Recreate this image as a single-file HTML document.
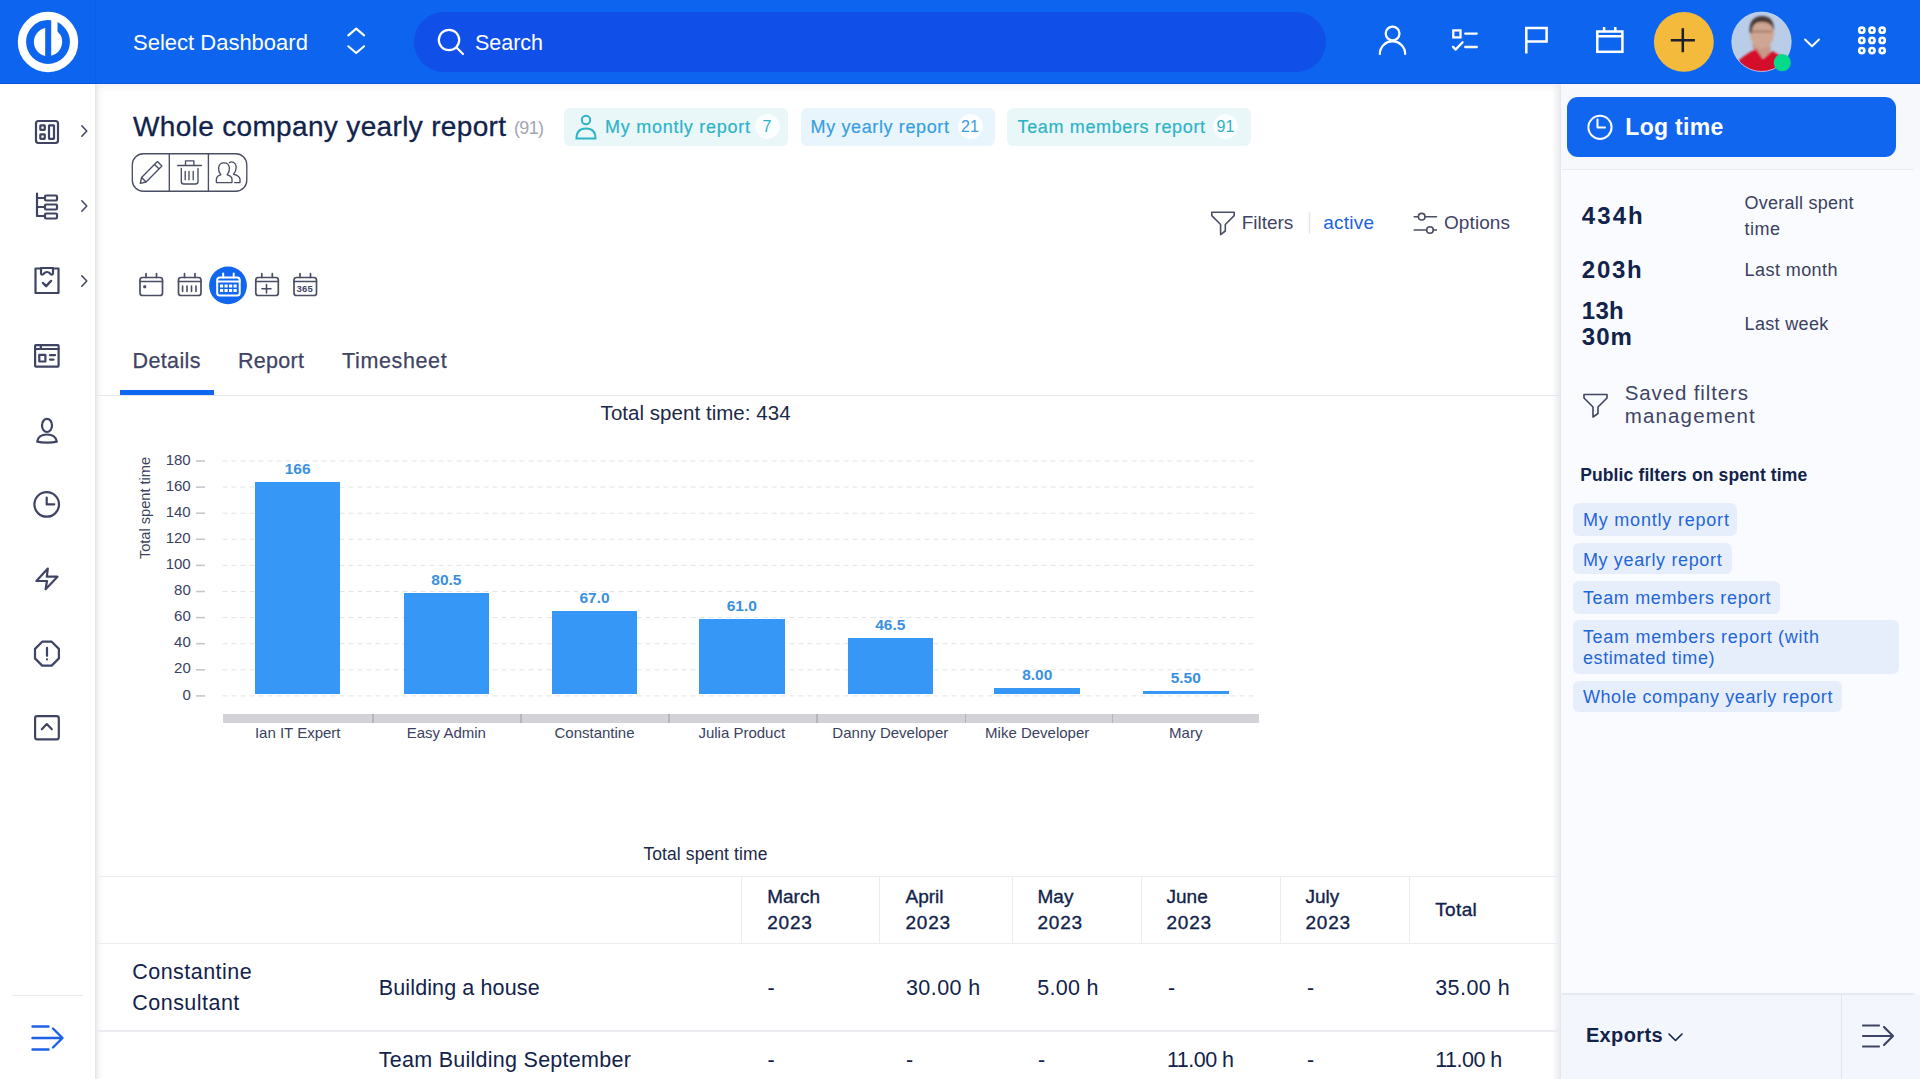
<!DOCTYPE html>
<html><head><meta charset="utf-8">
<style>
*{box-sizing:border-box;margin:0;padding:0}
html,body{width:1920px;height:1079px;overflow:hidden;background:#fff;font-family:"Liberation Sans",sans-serif}
.t{position:absolute;white-space:nowrap;line-height:1}
.b{position:absolute}
svg{position:absolute;overflow:visible}
</style></head><body>
<div class="b" style="left:96px;top:83px;width:1464px;height:996px;background:#fff"></div>
<div class="b" style="left:96px;top:83px;width:1464px;height:10px;background:linear-gradient(#f4f4f6,#fff)"></div>
<div class="b" style="left:1560px;top:83px;width:360px;height:996px;background:#f9fbfe"></div>
<div class="b" style="left:1552px;top:83px;width:8px;height:996px;background:linear-gradient(90deg,rgba(236,236,240,0),#ebebef)"></div>
<div class="b" style="left:1560px;top:83px;width:1px;height:996px;background:#e6e7ec"></div>
<div class="b" style="left:1561px;top:83px;width:359px;height:86px;background:#f6f8fb"></div>
<div class="b" style="left:0;top:83px;width:96px;height:996px;background:#fff"></div>
<div class="b" style="left:95px;top:83px;width:9px;height:996px;background:linear-gradient(90deg,#e4e4e7,rgba(240,240,242,.5) 40%,rgba(255,255,255,0))"></div>
<div class="b" style="left:0;top:0;width:1920px;height:84px;background:#0d65ef;border-bottom:1px solid #0a56dc"></div>
<div class="b" style="left:95px;top:0;width:1px;height:83px;background:rgba(0,0,40,.05)"></div>
<svg style="left:0;top:0" width="96" height="83" viewBox="0 0 96 83">
<circle cx="48" cy="42" r="26.05" fill="none" stroke="#fff" stroke-width="8.3"/>
<path d="M45.2,28.1 A14.2,14.2 0 0 0 45.2,55.9 Z" fill="#fff"/>
<path d="M51.2,19 H57.5 V31.5 A14.2,14.2 0 0 1 51.2,55.8 Z" fill="#fff"/>
</svg>
<div class="t" style="left:133.00px;top:32px;font-size:22px;color:#fff;">Select Dashboard</div>
<svg style="left:340px;top:20px" width="32" height="44" viewBox="0 0 32 44">
<path d="M8.3,15.4 L16.2,8.6 L24.1,15.4" fill="none" stroke="#fff" stroke-width="2.1" stroke-linecap="round" stroke-linejoin="round"/>
<path d="M8.3,26.3 L16.2,33 L24.1,26.3" fill="none" stroke="#fff" stroke-width="2.1" stroke-linecap="round" stroke-linejoin="round"/>
</svg>
<div class="b" style="left:414px;top:12px;width:912px;height:60px;border-radius:30px;background:#1050e9"></div>
<svg style="left:430px;top:20px" width="44" height="44" viewBox="0 0 44 44">
<circle cx="19" cy="20" r="10.2" fill="none" stroke="#fff" stroke-width="2.2"/>
<path d="M26.5,27.5 L33,34" stroke="#fff" stroke-width="2.2" stroke-linecap="round"/>
</svg>
<div class="t" style="left:475.00px;top:33px;font-size:21.5px;color:#fff;letter-spacing:-0.031px;">Search</div>
<svg style="left:1360px;top:0" width="560" height="83" viewBox="1360 0 560 83">
<g fill="none" stroke="#fff" stroke-width="2.3" stroke-linecap="round" stroke-linejoin="round">
<circle cx="1392.6" cy="33.5" r="6.85"/>
<path d="M1379.85,53.9 A12.65,12.65 0 0 1 1405.15,53.9"/>
<rect x="1453.3" y="30.4" width="7.2" height="7" stroke-linecap="butt" stroke-linejoin="miter"/>
<path d="M1465.2,33.6 H1476.8 M1465.2,47 H1476.8"/>
<path d="M1453,46.8 L1455.5,49.6 L1462.6,42.3"/>
<path d="M1526.3,53.6 V28.1 H1546.6 V41.4 H1526.3" stroke-width="2.5" stroke-linecap="butt" stroke-linejoin="miter"/>
<rect x="1597.3" y="31.5" width="25.1" height="20.3" stroke-width="2.5" stroke-linejoin="miter"/>
<path d="M1597.3,36.3 H1622.4 M1604.1,27 V31 M1615.3,27 V31" stroke-width="2.5" stroke-linecap="butt"/>
</g>
<circle cx="1683.85" cy="41.9" r="29.95" fill="#f3ba3c"/>
<path d="M1670.8,40.2 H1694.9 M1682.8,28.2 V52.3" stroke="#1a2030" stroke-width="2.5"/>
<g fill="none" stroke="#fff" stroke-width="2.6">
<circle cx="1861.8" cy="30.2" r="2.6"/><circle cx="1872" cy="30.2" r="2.6"/><circle cx="1882.2" cy="30.2" r="2.6"/>
<circle cx="1861.8" cy="40.4" r="2.6"/><circle cx="1872" cy="40.4" r="2.6"/><circle cx="1882.2" cy="40.4" r="2.6"/>
<circle cx="1861.8" cy="50.6" r="2.6"/><circle cx="1872" cy="50.6" r="2.6"/><circle cx="1882.2" cy="50.6" r="2.6"/>
</g>
</svg>
<svg style="left:1726px;top:6px" width="104" height="72" viewBox="1726 6 104 72">
<defs><clipPath id="av"><circle cx="1761.5" cy="41.8" r="29.7"/></clipPath>
<filter id="bl" x="-20%" y="-20%" width="140%" height="140%"><feGaussianBlur stdDeviation="0.9"/></filter></defs>
<circle cx="1761.5" cy="41.8" r="29.7" fill="#b9cde9"/>
<g clip-path="url(#av)"><g filter="url(#bl)">
<path d="M1752,44 C1753,52 1757,56 1763,58 L1770,54 L1771,46 Z" fill="#c7988a"/>
<ellipse cx="1762" cy="33" rx="12" ry="15.5" fill="#cfa593"/>
<path d="M1749.5,32 C1749,21 1754,16 1762,16 C1770,16 1774.5,21 1774,31 C1772,25 1769,22 1762,22 C1755,22 1752,25 1751.5,34 Z" fill="#4a3a34"/>
<path d="M1752,31.5 H1772" stroke="#6a4a40" stroke-width="1.6" opacity=".55"/>
<path d="M1734,76 L1736,64 C1741,57 1748,53 1756,49 L1763,59 L1772,51 C1778,54 1784,58 1788,64 L1790,76 Z" fill="#d40f2a"/></g></g>
<circle cx="1761.5" cy="41.8" r="29.7" fill="none" stroke="#cfe0f5" stroke-width="1" opacity=".7"/>
<circle cx="1782.3" cy="62.7" r="8.6" fill="#05d98a"/>
<path d="M1805,39.5 L1812,46.3 L1819,39.5" fill="none" stroke="#fff" stroke-width="1.9" stroke-linecap="round" stroke-linejoin="round"/>
</svg>
<svg style="left:0;top:83px" width="96" height="996" viewBox="0 83 96 996">
<g fill="none" stroke="#3f4464" stroke-width="2.2" stroke-linecap="round" stroke-linejoin="round">
<rect x="36" y="121" width="22" height="22" rx="2.5"/>
<rect x="40.3" y="125.3" width="4.5" height="4.5" rx="0.5"/>
<rect x="40.3" y="134.3" width="4.5" height="4.5" rx="0.5"/>
<rect x="49" y="125.3" width="5" height="13.5" rx="0.5"/>
<path d="M81.8,125.7 L86.8,131 L81.8,136.3" stroke-width="1.5"/>
<path d="M37,193.5 V216 H45"/>
<path d="M37,198 H45 M37,207 H45"/>
<rect x="45" y="195.5" width="12" height="5" rx="1"/>
<rect x="45" y="204.5" width="12" height="5" rx="1"/>
<rect x="45" y="213.5" width="12" height="5" rx="1"/>
<path d="M81.8,200.7 L86.8,206 L81.8,211.3" stroke-width="1.5"/>
<path d="M41,268.5 H35.5 V293 H58.5 V268.5 H53"/>
<path d="M41,268 V273 C41,275 43,275 44,273.5 C45.5,271.5 48.5,271.5 50,273.5 C51,275 53,275 53,273 V268 Z"/>
<path d="M43,283 L46.1,286.2 L51,281" stroke-width="2.5"/>
<path d="M81.8,275.7 L86.8,281 L81.8,286.3" stroke-width="1.5"/>
<rect x="35.1" y="345.1" width="23.5" height="21.5" rx="0.8"/>
<path d="M35.1,349 H58.6 M40.8,345.1 V349"/>
<rect x="39.3" y="354.9" width="6.1" height="6.6"/>
<path d="M50,355.2 H55 M50,359.6 H53.5"/>
<ellipse cx="47" cy="425.4" rx="5" ry="6.6"/>
<path d="M37.2,441.6 C38,436.5 41.5,434.5 47,434.5 C52.5,434.5 56,436.5 56.8,441.6 C52,443 42,443 37.2,441.6 Z"/>
<circle cx="46.7" cy="504.4" r="12.3"/>
<path d="M46.7,497.6 V504.4 H54.2"/>
<path d="M47.8,568.6 L36.4,581 H47 L45.6,589.2 L57.5,576.7 H46.8 Z"/>
<path d="M42.2,641.7 H51.7 L58.9,648.9 V658.4 L51.7,665.6 H42.2 L35,658.4 V648.9 Z"/>
<path d="M47,647.8 V655.8 M47,659.3 V659.5"/>
<rect x="35.1" y="716.2" width="23.7" height="23.1" rx="2"/>
<path d="M41.8,729.3 L46.8,724.1 L51.8,729.3"/>
</g>
<path d="M12,995.5 H83" stroke="#e8e8ee" stroke-width="1"/>
<g fill="none" stroke="#1d62e6" stroke-width="2.4" stroke-linecap="round" stroke-linejoin="round">
<path d="M32.5,1026.5 H48.5 M32.5,1038 H62 M32.5,1049.5 H48.5 M53,1028.5 L62.5,1038 L53,1047.5"/>
</g>
</svg>
<div class="b" style="left:47px;top:652px;width:0;height:0"></div>
<div class="t" style="left:133.00px;top:113px;font-size:28px;color:#12234b;letter-spacing:0.341px;-webkit-text-stroke:0.3px #12234b;">Whole company yearly report</div>
<div class="t" style="left:514.00px;top:119px;font-size:18px;color:#a2a6b4;letter-spacing:-0.680px;">(91)</div>
<div class="b" style="left:564px;top:108px;width:224px;height:38px;border-radius:6px;background:#e9f7f9"></div>
<div class="t" style="left:605.00px;top:118px;font-size:18px;color:#2eb3c5;letter-spacing:0.733px;-webkit-text-stroke:0.2px #2eb3c5;">My montly report</div>
<div class="b" style="left:754.5px;top:114px;width:25px;height:25px;border-radius:50%;background:rgba(255,255,255,.8)"></div>
<div class="t" style="left:762.56px;top:119px;font-size:16px;color:#2eb3c5;">7</div>
<div class="b" style="left:801px;top:108px;width:194px;height:38px;border-radius:6px;background:#e9f5fd"></div>
<div class="t" style="left:810.60px;top:118px;font-size:18px;color:#389ee0;letter-spacing:0.623px;-webkit-text-stroke:0.2px #389ee0;">My yearly report</div>
<div class="b" style="left:957.5px;top:114px;width:25px;height:25px;border-radius:50%;background:rgba(255,255,255,.8)"></div>
<div class="t" style="left:961.12px;top:119px;font-size:16px;color:#389ee0;">21</div>
<div class="b" style="left:1007px;top:108px;width:243.5px;height:38px;border-radius:6px;background:#e9f7f9"></div>
<div class="t" style="left:1017.60px;top:118px;font-size:18px;color:#2eb3c5;letter-spacing:0.631px;-webkit-text-stroke:0.2px #2eb3c5;">Team members report</div>
<div class="b" style="left:1213.0px;top:114px;width:25px;height:25px;border-radius:50%;background:rgba(255,255,255,.8)"></div>
<div class="t" style="left:1216.62px;top:119px;font-size:16px;color:#2eb3c5;">91</div>
<svg style="left:570px;top:110px" width="34" height="34" viewBox="570 110 34 34">
<g fill="none" stroke="#2eb3c5" stroke-width="2" stroke-linecap="round">
<circle cx="586" cy="120" r="4.2"/>
<path d="M576.5,138.5 C576.5,131 580.5,128.5 586,128.5 C591.5,128.5 595.5,131 595.5,138.5 Z"/>
</g></svg>
<svg style="left:130px;top:150px" width="120" height="44" viewBox="130 150 120 44">
<g fill="none" stroke="#4a4e64" stroke-width="1.35" stroke-linecap="round" stroke-linejoin="round">
<rect x="132.3" y="153.7" width="114.5" height="37.5" rx="11"/>
<path d="M169.3,153.7 V191.2 M208.4,153.7 V191.2" stroke-linecap="butt"/>
<path d="M140.3,183.3 L141.56,177.49 L157.4,161.6 L161.9,166.1 L146.1,182 Z M141.56,177.49 L146.1,182 M154.55,164.45 L159.1,168.96"/>
<path d="M177.7,165.5 H201.3 M185.5,165.5 V160.9 H193.9 V165.5 M181.3,168.4 V181.5 Q181.3,184 183.8,184 H195.5 Q198,184 198,181.5 V168.4 M185.2,171.3 V179.7 M189,171.3 V179.7 M193.2,171.3 V179.7"/>
<path d="M216.4,182.6 H232 V179.5 C232,177 230.5,176 228,175.2 L227.2,174.6 C228.7,173 229.6,170.5 229.4,168 C229.1,164.5 227,162.9 224,162.9 C221,162.9 218.9,164.5 218.6,168 C218.4,170.5 219.3,173 220.8,174.6 L220,175.2 C217.5,176 216.4,177 216.4,179.5 Z"/>
<path d="M229.4,162.6 C232,161 236,162.5 236.2,167 C236.3,170 235,172.5 233.5,174.2 C237,175.2 240,176.2 240,179.5 V182.6 H234.6"/>
</g></svg>
<svg style="left:1200px;top:200px" width="320" height="50" viewBox="1200 200 320 50">
<g fill="none" stroke="#4a4e64" stroke-width="1.6" stroke-linejoin="round" stroke-linecap="round">
<path d="M1211.8,212.2 H1234.2 V215.6 L1225.3,224.5 V231 L1220.6,234.6 V224.5 L1211.8,215.6 Z"/>
<circle cx="1421.7" cy="216.7" r="3.3"/><path d="M1414.2,216.7 H1418.4 M1425,216.7 H1436.5"/>
<circle cx="1430" cy="230" r="3.3"/><path d="M1414.2,230 H1426.7 M1433.3,230 H1436.5"/>
</g>
<path d="M1309.5,212.5 V233.5" stroke="#e3e4ea" stroke-width="1.5"/>
</svg>
<div class="t" style="left:1241.70px;top:213px;font-size:19px;color:#3f4464;letter-spacing:-0.013px;">Filters</div>
<div class="t" style="left:1323.30px;top:213px;font-size:19px;color:#1d63e1;letter-spacing:0.222px;">active</div>
<div class="t" style="left:1444.00px;top:213px;font-size:19px;color:#3f4464;letter-spacing:0.091px;">Options</div>
<svg style="left:130px;top:260px" width="200" height="50" viewBox="130 260 200 50">
<g fill="none" stroke="#4a4e64" stroke-width="1.7" stroke-linecap="round" stroke-linejoin="round">
<rect x="140.0" y="277.5" width="22.5" height="18" rx="2.5"/>
<path d="M140.0,281.5 H162.5 M146.0,273.5 V277.5 M156.5,273.5 V277.5"/>
<rect x="144" y="286" width="1.5" height="1.5" fill="#3f4464" stroke-width="1.4"/></g>
<g fill="none" stroke="#4a4e64" stroke-width="1.7" stroke-linecap="round" stroke-linejoin="round">
<rect x="178.5" y="277.5" width="22.5" height="18" rx="2.5"/>
<path d="M178.5,281.5 H201 M184.5,273.5 V277.5 M195,273.5 V277.5"/>
<path d="M182.6,286 V291.5 M187,286 V291.5 M191.5,286 V291.5 M196,286 V291.5" stroke-width="1.6"/></g>
<circle cx="228" cy="285.4" r="18.9" fill="#1166ef"/>
<g fill="none" stroke="#fff" stroke-width="2" stroke-linecap="round" stroke-linejoin="round">
<rect x="217.2" y="277.5" width="22.5" height="18" rx="2.5"/>
<path d="M217.2,281.5 H239.7 M223.2,273.5 V277.5 M233.7,273.5 V277.5"/>
<g fill="#fff" stroke="none"><rect x="220" y="284.5" width="3.2" height="3"/><rect x="224.5" y="284.5" width="3.2" height="3"/><rect x="229" y="284.5" width="3.2" height="3"/><rect x="233.5" y="284.5" width="3.2" height="3"/><rect x="220" y="289" width="3.2" height="3"/><rect x="224.5" y="289" width="3.2" height="3"/><rect x="229" y="289" width="3.2" height="3"/><rect x="233.5" y="289" width="3.2" height="3"/></g></g>
<g fill="none" stroke="#4a4e64" stroke-width="1.7" stroke-linecap="round" stroke-linejoin="round">
<rect x="255.8" y="277.5" width="22.5" height="18" rx="2.5"/>
<path d="M255.8,281.5 H278.3 M261.8,273.5 V277.5 M272.3,273.5 V277.5"/>
<path d="M266.5,284.5 V293 M262,288.7 H271" stroke-width="1.6"/></g>
<g fill="none" stroke="#4a4e64" stroke-width="1.7" stroke-linecap="round" stroke-linejoin="round">
<rect x="294.0" y="277.5" width="22.5" height="18" rx="2.5"/>
<path d="M294.0,281.5 H316.5 M300.0,273.5 V277.5 M310.5,273.5 V277.5"/>
</g>
</svg>
<div class="t" style="left:296.5px;top:284px;font-size:9.5px;font-weight:700;color:#3f4464;letter-spacing:0.2px">365</div>
<div class="t" style="left:132.50px;top:351px;font-size:21.5px;color:#3f4464;letter-spacing:0.386px;-webkit-text-stroke:0.25px #3f4464;">Details</div>
<div class="t" style="left:238.00px;top:351px;font-size:21.5px;color:#3f4464;letter-spacing:0.300px;-webkit-text-stroke:0.25px #3f4464;">Report</div>
<div class="t" style="left:342.00px;top:351px;font-size:21.5px;color:#3f4464;letter-spacing:0.632px;-webkit-text-stroke:0.25px #3f4464;">Timesheet</div>
<div class="b" style="left:96px;top:394.5px;width:1464px;height:1.5px;background:#e6e7ec"></div>
<div class="b" style="left:120px;top:389.5px;width:93.5px;height:5px;background:#0f66f0"></div>
<div class="t" style="left:600.60px;top:403px;font-size:20.5px;color:#1c2847;letter-spacing:0.039px;">Total spent time: 434</div>
<svg style="left:0;top:0" width="1300" height="760" viewBox="0 0 1300 760"><path d="M222.5,461.0 H1254" stroke="#e3e4e7" stroke-width="1" stroke-dasharray="5,4"/><path d="M196,461.0 H205" stroke="#c6c7ce" stroke-width="1.6"/><path d="M222.5,487.1 H1254" stroke="#e3e4e7" stroke-width="1" stroke-dasharray="5,4"/><path d="M196,487.1 H205" stroke="#c6c7ce" stroke-width="1.6"/><path d="M222.5,513.2 H1254" stroke="#e3e4e7" stroke-width="1" stroke-dasharray="5,4"/><path d="M196,513.2 H205" stroke="#c6c7ce" stroke-width="1.6"/><path d="M222.5,539.3 H1254" stroke="#e3e4e7" stroke-width="1" stroke-dasharray="5,4"/><path d="M196,539.3 H205" stroke="#c6c7ce" stroke-width="1.6"/><path d="M222.5,565.4 H1254" stroke="#e3e4e7" stroke-width="1" stroke-dasharray="5,4"/><path d="M196,565.4 H205" stroke="#c6c7ce" stroke-width="1.6"/><path d="M222.5,591.5 H1254" stroke="#e3e4e7" stroke-width="1" stroke-dasharray="5,4"/><path d="M196,591.5 H205" stroke="#c6c7ce" stroke-width="1.6"/><path d="M222.5,617.6 H1254" stroke="#e3e4e7" stroke-width="1" stroke-dasharray="5,4"/><path d="M196,617.6 H205" stroke="#c6c7ce" stroke-width="1.6"/><path d="M222.5,643.7 H1254" stroke="#e3e4e7" stroke-width="1" stroke-dasharray="5,4"/><path d="M196,643.7 H205" stroke="#c6c7ce" stroke-width="1.6"/><path d="M222.5,669.8 H1254" stroke="#e3e4e7" stroke-width="1" stroke-dasharray="5,4"/><path d="M196,669.8 H205" stroke="#c6c7ce" stroke-width="1.6"/><path d="M222.5,695.9 H1254" stroke="#e3e4e7" stroke-width="1" stroke-dasharray="5,4"/><path d="M196,695.9 H205" stroke="#c6c7ce" stroke-width="1.6"/></svg>
<div class="t" style="left:165.65px;top:452px;font-size:15px;color:#3a4260;">180</div>
<div class="t" style="left:165.65px;top:478px;font-size:15px;color:#3a4260;">160</div>
<div class="t" style="left:165.65px;top:504px;font-size:15px;color:#3a4260;">140</div>
<div class="t" style="left:165.65px;top:530px;font-size:15px;color:#3a4260;">120</div>
<div class="t" style="left:165.65px;top:556px;font-size:15px;color:#3a4260;">100</div>
<div class="t" style="left:174.05px;top:582px;font-size:15px;color:#3a4260;">80</div>
<div class="t" style="left:174.05px;top:608px;font-size:15px;color:#3a4260;">60</div>
<div class="t" style="left:174.05px;top:634px;font-size:15px;color:#3a4260;">40</div>
<div class="t" style="left:174.05px;top:660px;font-size:15px;color:#3a4260;">20</div>
<div class="t" style="left:182.38px;top:687px;font-size:15px;color:#3a4260;">0</div>
<div class="t" style="left:145px;top:508px;font-size:14.6px;color:#3a4260;transform:translate(-50%,-50%) rotate(-90deg);transform-origin:center">Total spent time</div>
<div class="b" style="left:255px;top:482.3px;width:85.39999999999998px;height:211.90000000000003px;background:#3797f7"></div>
<div class="t" style="left:284.76px;top:461px;font-size:15.5px;color:#3a90e0;font-weight:700;">166</div>
<div class="t" style="left:254.91px;top:725px;font-size:15px;color:#3a4260;">Ian IT Expert</div>
<div class="b" style="left:404px;top:593.2px;width:84.69999999999999px;height:101.0px;background:#3797f7"></div>
<div class="t" style="left:431.28px;top:572px;font-size:15.5px;color:#3a90e0;font-weight:700;">80.5</div>
<div class="t" style="left:406.75px;top:725px;font-size:15px;color:#3a4260;">Easy Admin</div>
<div class="b" style="left:552px;top:611px;width:85px;height:83.20000000000005px;background:#3797f7"></div>
<div class="t" style="left:579.43px;top:590px;font-size:15.5px;color:#3a90e0;font-weight:700;">67.0</div>
<div class="t" style="left:554.49px;top:725px;font-size:15px;color:#3a4260;">Constantine</div>
<div class="b" style="left:699px;top:619px;width:85.5px;height:75.20000000000005px;background:#3797f7"></div>
<div class="t" style="left:726.68px;top:598px;font-size:15.5px;color:#3a90e0;font-weight:700;">61.0</div>
<div class="t" style="left:698.40px;top:725px;font-size:15px;color:#3a4260;">Julia Product</div>
<div class="b" style="left:847.6px;top:638px;width:85.39999999999998px;height:56.200000000000045px;background:#3797f7"></div>
<div class="t" style="left:875.23px;top:617px;font-size:15.5px;color:#3a90e0;font-weight:700;">46.5</div>
<div class="t" style="left:832.36px;top:725px;font-size:15px;color:#3a4260;">Danny Developer</div>
<div class="b" style="left:994.4px;top:688.2px;width:85.60000000000002px;height:6.0px;background:#3797f7"></div>
<div class="t" style="left:1022.13px;top:667px;font-size:15.5px;color:#3a90e0;font-weight:700;">8.00</div>
<div class="t" style="left:985.08px;top:725px;font-size:15px;color:#3a4260;">Mike Developer</div>
<div class="b" style="left:1143px;top:691.3px;width:85.5px;height:2.900000000000091px;background:#3797f7"></div>
<div class="t" style="left:1170.68px;top:670px;font-size:15.5px;color:#3a90e0;font-weight:700;">5.50</div>
<div class="t" style="left:1169.10px;top:725px;font-size:15px;color:#3a4260;">Mary</div>
<div class="b" style="left:222.5px;top:714px;width:1036px;height:9.4px;background:#d3d3d7"></div>
<div class="b" style="left:372.15px;top:714px;width:1.5px;height:9.4px;background:#b5b5bb"></div>
<div class="b" style="left:520.15px;top:714px;width:1.5px;height:9.4px;background:#b5b5bb"></div>
<div class="b" style="left:668.15px;top:714px;width:1.5px;height:9.4px;background:#b5b5bb"></div>
<div class="b" style="left:816.15px;top:714px;width:1.5px;height:9.4px;background:#b5b5bb"></div>
<div class="b" style="left:964.65px;top:714px;width:1.5px;height:9.4px;background:#b5b5bb"></div>
<div class="b" style="left:1111.55px;top:714px;width:1.5px;height:9.4px;background:#b5b5bb"></div>
<div class="t" style="left:643.40px;top:846px;font-size:17.5px;color:#1c2847;letter-spacing:0.094px;">Total spent time</div>
<div class="b" style="left:96px;top:875.5px;width:1464px;height:1.5px;background:#ececf0"></div>
<div class="b" style="left:96px;top:942.5px;width:1464px;height:1.5px;background:#ececf0"></div>
<div class="b" style="left:96px;top:1030px;width:1464px;height:1.5px;background:#ececf0"></div>
<div class="b" style="left:741.4px;top:876px;width:1px;height:67px;background:#ececf0"></div>
<div class="b" style="left:879.2px;top:876px;width:1px;height:67px;background:#ececf0"></div>
<div class="b" style="left:1011.7px;top:876px;width:1px;height:67px;background:#ececf0"></div>
<div class="b" style="left:1140.8px;top:876px;width:1px;height:67px;background:#ececf0"></div>
<div class="b" style="left:1280.3px;top:876px;width:1px;height:67px;background:#ececf0"></div>
<div class="b" style="left:1409.4px;top:876px;width:1px;height:67px;background:#ececf0"></div>
<div class="t" style="left:767.20px;top:887px;font-size:19px;color:#12234b;font-weight:400;-webkit-text-stroke:0.35px #12234b;">March</div>
<div class="t" style="left:767.20px;top:913px;font-size:19px;color:#12234b;letter-spacing:0.808px;-webkit-text-stroke:0.35px #12234b;">2023</div>
<div class="t" style="left:905.50px;top:887px;font-size:19px;color:#12234b;font-weight:400;-webkit-text-stroke:0.35px #12234b;">April</div>
<div class="t" style="left:905.50px;top:913px;font-size:19px;color:#12234b;letter-spacing:0.808px;-webkit-text-stroke:0.35px #12234b;">2023</div>
<div class="t" style="left:1037.50px;top:887px;font-size:19px;color:#12234b;font-weight:400;-webkit-text-stroke:0.35px #12234b;">May</div>
<div class="t" style="left:1037.50px;top:913px;font-size:19px;color:#12234b;letter-spacing:0.808px;-webkit-text-stroke:0.35px #12234b;">2023</div>
<div class="t" style="left:1166.50px;top:887px;font-size:19px;color:#12234b;font-weight:400;-webkit-text-stroke:0.35px #12234b;">June</div>
<div class="t" style="left:1166.50px;top:913px;font-size:19px;color:#12234b;letter-spacing:0.808px;-webkit-text-stroke:0.35px #12234b;">2023</div>
<div class="t" style="left:1305.50px;top:887px;font-size:19px;color:#12234b;font-weight:400;-webkit-text-stroke:0.35px #12234b;">July</div>
<div class="t" style="left:1305.50px;top:913px;font-size:19px;color:#12234b;letter-spacing:0.808px;-webkit-text-stroke:0.35px #12234b;">2023</div>
<div class="t" style="left:1435.20px;top:900px;font-size:19px;color:#12234b;letter-spacing:0.377px;-webkit-text-stroke:0.35px #12234b;">Total</div>
<div class="t" style="left:132.30px;top:962px;font-size:21.5px;color:#12234b;letter-spacing:0.460px;">Constantine</div>
<div class="t" style="left:132.30px;top:993px;font-size:21.5px;color:#12234b;letter-spacing:0.470px;">Consultant</div>
<div class="t" style="left:378.80px;top:978px;font-size:21.5px;color:#12234b;letter-spacing:0.121px;">Building a house</div>
<div class="t" style="left:767.50px;top:978px;font-size:21.5px;color:#12234b;">-</div>
<div class="t" style="left:905.90px;top:978px;font-size:21.5px;color:#12234b;letter-spacing:0.450px;">30.00 h</div>
<div class="t" style="left:1037.20px;top:978px;font-size:21.5px;color:#12234b;letter-spacing:0.286px;">5.00 h</div>
<div class="t" style="left:1168.00px;top:978px;font-size:21.5px;color:#12234b;">-</div>
<div class="t" style="left:1307.00px;top:978px;font-size:21.5px;color:#12234b;">-</div>
<div class="t" style="left:1435.20px;top:978px;font-size:21.5px;color:#12234b;letter-spacing:0.450px;">35.00 h</div>
<div class="t" style="left:378.80px;top:1050px;font-size:21.5px;color:#12234b;letter-spacing:0.265px;">Team Building September</div>
<div class="t" style="left:767.50px;top:1050px;font-size:21.5px;color:#12234b;">-</div>
<div class="t" style="left:906.00px;top:1050px;font-size:21.5px;color:#12234b;">-</div>
<div class="t" style="left:1038.00px;top:1050px;font-size:21.5px;color:#12234b;">-</div>
<div class="t" style="left:1167.00px;top:1050px;font-size:21.5px;color:#12234b;letter-spacing:-0.515px;">11.00 h</div>
<div class="t" style="left:1307.00px;top:1050px;font-size:21.5px;color:#12234b;">-</div>
<div class="t" style="left:1435.20px;top:1050px;font-size:21.5px;color:#12234b;letter-spacing:-0.515px;">11.00 h</div>
<div class="b" style="left:1567.4px;top:97px;width:328.5px;height:60px;border-radius:11px;background:#1166ef"></div>
<svg style="left:1580px;top:108px" width="40" height="40" viewBox="1580 108 40 40">
<g fill="none" stroke="#fff" stroke-width="2" stroke-linecap="round" stroke-linejoin="round">
<circle cx="1600" cy="127.3" r="11.6"/><path d="M1597.5,119.5 V127.5 H1605"/></g></svg>
<div class="t" style="left:1625.30px;top:116px;font-size:23px;color:#fff;font-weight:700;letter-spacing:0.315px;">Log time</div>
<div class="b" style="left:1562px;top:168.5px;width:352px;height:1.5px;background:#e9ebf0"></div>
<div class="t" style="left:1581.80px;top:204px;font-size:24px;color:#12234b;font-weight:700;letter-spacing:2.093px;">434h</div>
<div class="t" style="left:1581.80px;top:258px;font-size:24px;color:#12234b;font-weight:700;letter-spacing:1.760px;">203h</div>
<div class="t" style="left:1581.80px;top:299px;font-size:24px;color:#12234b;font-weight:700;letter-spacing:0.300px;">13h</div>
<div class="t" style="left:1581.80px;top:325px;font-size:24px;color:#12234b;font-weight:700;letter-spacing:1.000px;">30m</div>
<div class="t" style="left:1744.60px;top:194px;font-size:18px;color:#3a4060;letter-spacing:0.248px;">Overall spent</div>
<div class="t" style="left:1744.60px;top:220px;font-size:18px;color:#3a4060;letter-spacing:0.493px;">time</div>
<div class="t" style="left:1744.60px;top:261px;font-size:18px;color:#3a4060;letter-spacing:0.421px;">Last month</div>
<div class="t" style="left:1744.60px;top:315px;font-size:18px;color:#3a4060;letter-spacing:0.327px;">Last week</div>
<svg style="left:1580px;top:390px" width="32" height="32" viewBox="1580 390 32 32">
<path d="M1584,394.5 H1607 V398 L1598,407 V413.5 L1593,417 V407 L1584,398 Z" fill="none" stroke="#3f4464" stroke-width="1.6" stroke-linejoin="round"/></svg>
<div class="t" style="left:1624.70px;top:383px;font-size:20.5px;color:#3f4464;letter-spacing:0.879px;">Saved filters</div>
<div class="t" style="left:1624.70px;top:406px;font-size:20.5px;color:#3f4464;letter-spacing:1.154px;">management</div>
<div class="t" style="left:1580.20px;top:467px;font-size:17.5px;color:#12234b;font-weight:700;letter-spacing:0.124px;">Public filters on spent time</div>
<div class="b" style="left:1573px;top:503.2px;width:164px;height:32.50000000000006px;border-radius:6px;background:#e7eefb"></div>
<div class="t" style="left:1582.90px;top:511px;font-size:18px;color:#1f66d6;letter-spacing:0.799px;">My montly report</div>
<div class="b" style="left:1573px;top:542.8px;width:158.79999999999995px;height:31.40000000000009px;border-radius:6px;background:#e7eefb"></div>
<div class="t" style="left:1582.90px;top:551px;font-size:18px;color:#1f66d6;letter-spacing:0.649px;">My yearly report</div>
<div class="b" style="left:1573px;top:581.4px;width:207px;height:32.39999999999998px;border-radius:6px;background:#e7eefb"></div>
<div class="t" style="left:1582.90px;top:589px;font-size:18px;color:#1f66d6;letter-spacing:0.648px;">Team members report</div>
<div class="b" style="left:1573px;top:620.4px;width:326.4000000000001px;height:53.200000000000045px;border-radius:6px;background:#e7eefb"></div>
<div class="t" style="left:1582.90px;top:628px;font-size:18px;color:#1f66d6;letter-spacing:0.706px;">Team members report (with</div>
<div class="t" style="left:1582.90px;top:649px;font-size:18px;color:#1f66d6;letter-spacing:0.612px;">estimated time)</div>
<div class="b" style="left:1573px;top:680.8px;width:268.9000000000001px;height:31.300000000000068px;border-radius:6px;background:#e7eefb"></div>
<div class="t" style="left:1582.90px;top:688px;font-size:18px;color:#1f66d6;letter-spacing:0.593px;">Whole company yearly report</div>
<div class="b" style="left:1561px;top:994px;width:359px;height:85px;background:#f3f6fc"></div>
<div class="b" style="left:1561.8px;top:993px;width:352px;height:1.5px;background:#e6e9f0"></div>
<div class="b" style="left:1841.3px;top:995px;width:1px;height:84px;background:#e3e6ec"></div>
<div class="t" style="left:1585.90px;top:1025px;font-size:20px;color:#12234b;font-weight:700;letter-spacing:0.383px;">Exports</div>
<svg style="left:1660px;top:1020px" width="260" height="40" viewBox="1660 1020 260 40">
<path d="M1669,1034 L1675.5,1040.5 L1682,1034" fill="none" stroke="#12234b" stroke-width="1.6" stroke-linecap="round" stroke-linejoin="round"/>
<g fill="none" stroke="#3f4464" stroke-width="2.2" stroke-linecap="round" stroke-linejoin="round">
<path d="M1863,1025.5 H1879 M1863,1036 H1893 M1863,1046.5 H1879 M1884,1027 L1893,1036 L1884,1045"/></g></svg>
</body></html>
